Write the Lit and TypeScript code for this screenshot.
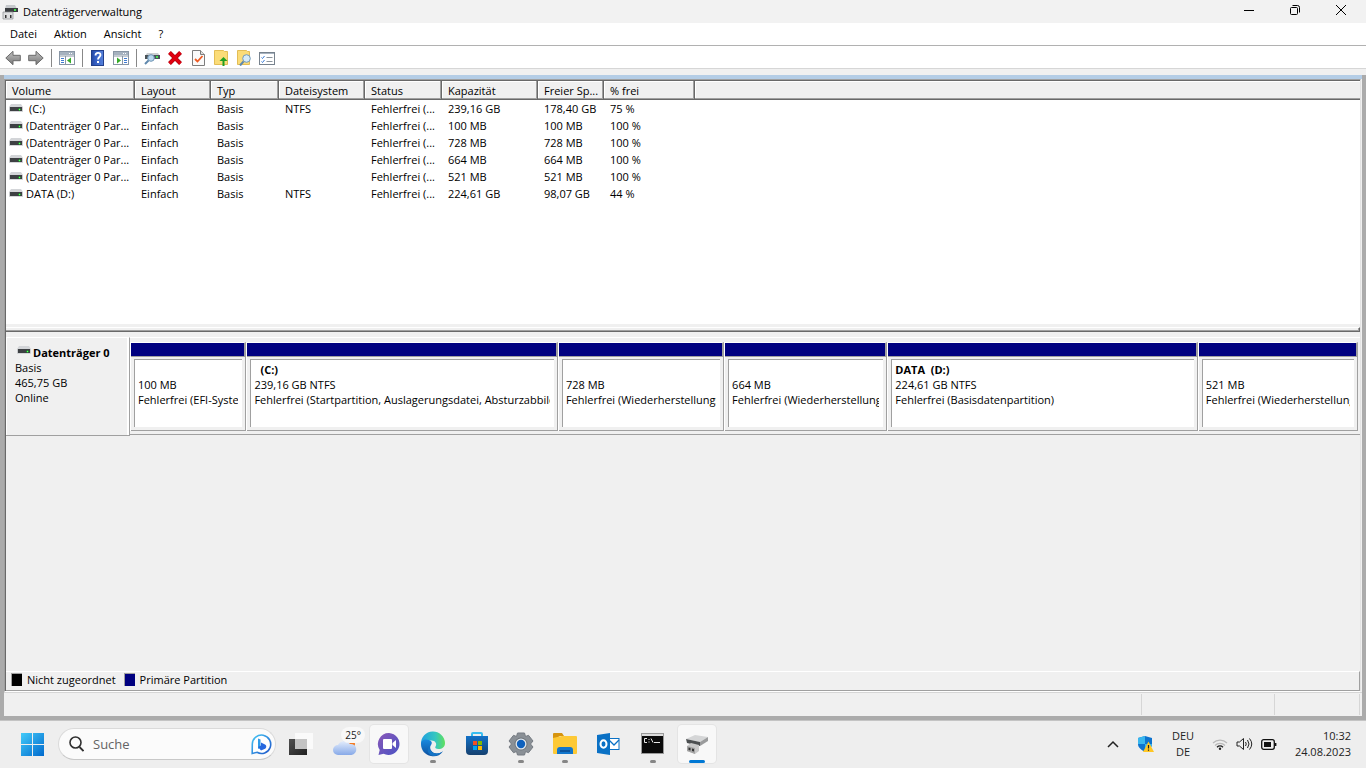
import { LitElement, html, css, svg, nothing } from "lit";
import { customElement } from "lit/decorators.js";
import { styleMap } from "lit/directives/style-map.js";

interface Volume {
  name: string;
  system?: boolean;
  fs: string;
  size: string;
  free: string;
  pct: string;
}

interface Partition {
  name?: string;
  indent?: boolean;
  size: string;
  status: string;
  weight: number;
}

const VOLUMES: Volume[] = [
  { name: "(C:)", system: true, fs: "NTFS", size: "239,16 GB", free: "178,40 GB", pct: "75 %" },
  { name: "(Datenträger 0 Par...", fs: "", size: "100 MB", free: "100 MB", pct: "100 %" },
  { name: "(Datenträger 0 Par...", fs: "", size: "728 MB", free: "728 MB", pct: "100 %" },
  { name: "(Datenträger 0 Par...", fs: "", size: "664 MB", free: "664 MB", pct: "100 %" },
  { name: "(Datenträger 0 Par...", fs: "", size: "521 MB", free: "521 MB", pct: "100 %" },
  { name: "DATA (D:)", fs: "NTFS", size: "224,61 GB", free: "98,07 GB", pct: "44 %" },
];

const PARTITIONS: Partition[] = [
  { size: "100 MB", status: "Fehlerfrei (EFI-Systempartition)", weight: 116 },
  { name: "(C:)", indent: true, size: "239,16 GB NTFS", status: "Fehlerfrei (Startpartition, Auslagerungsdatei, Absturzabbild)", weight: 312 },
  { size: "728 MB", status: "Fehlerfrei (Wiederherstellungspartition)", weight: 166 },
  { size: "664 MB", status: "Fehlerfrei (Wiederherstellungspartition)", weight: 163 },
  { name: "DATA  (D:)", size: "224,61 GB NTFS", status: "Fehlerfrei (Basisdatenpartition)", weight: 311 },
  { size: "521 MB", status: "Fehlerfrei (Wiederherstellungspartition)", weight: 160 },
];

const COLUMNS = [
  ["Volume", "c-volume"], ["Layout", "c-layout"], ["Typ", "c-typ"], ["Dateisystem", "c-fs"],
  ["Status", "c-status"], ["Kapazität", "c-size"], ["Freier Sp...", "c-free"], ["% frei", "c-pct"],
];

const icon = (w: number, h: number, body: unknown) =>
  html`<svg width=${w} height=${h} viewBox="0 0 ${w} ${h}" aria-hidden="true">${body}</svg>`;

const driveIcon = icon(14, 9, svg`
  <path d="M2 0h10l2 3H0z" fill="#d3d5d8"/>
  <rect x="0" y="3" width="14" height="4" fill="#c9cbcd"/>
  <rect x="1" y="3" width="12" height="4" fill="#3d4043"/>
  <rect y="7" width="14" height="1" fill="#d5d7d9"/>
  <rect x="9" y="5" width="3" height="1" fill="#1f9a2a"/><rect x="10" y="4" width="1" height="3" fill="#1f9a2a"/><rect x="10" y="5" width="1" height="1" fill="#5dff66"/>`);

const appIcon = icon(16, 16, svg`
  <path d="M4 1h9l2 4H3z" fill="#c6c9cc"/><rect x="3" y="4" width="13" height="4" fill="#3a3d40"/>
  <rect x="12" y="5" width="2" height="2" fill="#44e04e"/>
  <path d="M1 8h10v7H1z" fill="#dedfe0" stroke="#8b8d90" stroke-width=".7"/>
  <path d="M3 11h1.500v3H3zM8 11h1.500v3H8z" fill="#333"/>`);

const arrow = (right: boolean) => icon(16, 16, svg`
  <g transform=${right ? "matrix(-1 0 0 1 16 0)" : "matrix(1 0 0 1 0 0)"}>
    <defs><linearGradient id="ag" x2="0" y2="1"><stop stop-color="#c2c2c2"/><stop offset="1" stop-color="#777"/></linearGradient></defs>
    <path d="M.8 8L8 1.300v4h7.300v5.400H8v4z" fill="url(#ag)" stroke="#6b6b6b"/>
  </g>`);

const paneIcon = (left: boolean) => icon(16, 14, svg`
  <rect x=".5" y=".5" width="15" height="13" fill="#fff" stroke="#8996a5"/>
  <rect x="1" y="1" width="14" height="3" fill="#a6b2bf"/>
  <path d="M10 2.500h1M12 2.500h1" stroke="#fff"/>
  <path d="M1 5h14" stroke="#8996a5"/>
  ${left
    ? svg`<path d="M6.500 5v8" stroke="#8996a5"/><path d="M2 7.500h3M2 9.500h3M2 11.500h3" stroke="#3f7ad0"/><path d="M12 6.500v6L8 9.500z" fill="#35ab28"/>`
    : svg`<path d="M9.500 5v8" stroke="#8996a5"/><path d="M11 7.500h3M11 9.500h3M11 11.500h3" stroke="#3f7ad0"/><path d="M4 6.500v6l4-3z" fill="#35ab28"/>`}`);

const helpIcon = icon(14, 16, svg`
  <defs><linearGradient id="hg"><stop stop-color="#27489c"/><stop offset=".25" stop-color="#2f58bd"/><stop offset="1" stop-color="#5682dc"/></linearGradient></defs>
  <rect x=".5" y=".5" width="12" height="15" fill="url(#hg)" stroke="#223f8c"/>
  <path d="M4.500 5.500c0-3.500 5-3.500 5-.5 0 2-2.500 2-2.500 4.500" fill="none" stroke="#fff" stroke-width="1.800"/>
  <rect x="6" y="11" width="2" height="2" fill="#fff"/>`);

const connectIcon = icon(16, 14, svg`
  <path d="M3 2h11l2 3H1z" fill="#cdd0d3"/><rect x="1" y="4" width="15" height="4" fill="#4a5257"/>
  <rect x="12" y="5" width="2" height="2" fill="#46e052"/>
  <circle cx="7" cy="7" r="3.300" fill="#b9d7ee" stroke="#6d93b3"/>
  <path d="M4.500 9.500L1 13" stroke="#5f88ad" stroke-width="2"/>`);

const deleteIcon = icon(14, 14, svg`
  <path d="M1.500 1.500L12.500 12.500M12.500 1.500L1.500 12.500" stroke="#a8000c" stroke-width="4"/>
  <path d="M1.500 1.500L12.500 12.500M12.500 1.500L1.500 12.500" stroke="#e0000f" stroke-width="3"/>`);

const checkIcon = icon(13, 16, svg`
  <path d="M.5.5h8l4 4v11H.5z" fill="#fafafa" stroke="#7d7d7d"/><path d="M8.500.500v4h4" fill="#ddd" stroke="#7d7d7d"/>
  <path d="M3 9l2.500 2.500L10.500 6" fill="none" stroke="#ee5a22" stroke-width="1.800"/>`);

const folderUp = icon(14, 16, svg`
  <path d="M.5.5h9l1 1h3v13H.5z" fill="#fbdc78" stroke="#e3bd55"/>
  <path d="M9.500 7L13.500 11h-3v5H8.500v-5h-3z" fill="#22a022"/>`);

const folderSearch = icon(15, 16, svg`
  <path d="M.5.5h9l1 1h2v13H.5z" fill="#fbdc78" stroke="#e3bd55"/>
  <circle cx="9.500" cy="8.500" r="3.800" fill="#d6ebf8" stroke="#7199b8"/>
  <path d="M6.500 11.500L3 15.500" stroke="#5f88ad" stroke-width="2"/>`);

const propsIcon = icon(16, 13, svg`
  <rect x=".5" y=".5" width="15" height="12" fill="#fff" stroke="#77828d"/><path d="M1 1.500h14" stroke="#a6b2bf"/>
  <path d="M2.500 5.500l1 1 2-2.500M2.500 9.500l1 1 2-2.500" fill="none" stroke="#3579d6"/>
  <path d="M7.500 5.500h6M7.500 9.500h6" stroke="#8b949c"/>`);

const startIcon = icon(24, 24, svg`
  <defs><linearGradient id="sg" x2="1" y2="1"><stop stop-color="#43cbf9"/><stop offset="1" stop-color="#0069cd"/></linearGradient></defs>
  <path d="M0 1h11v11H0zM12 1h11v11H12zM0 13h11v11H0zM12 13h11v11H12z" fill="url(#sg)"/>`);

const searchIcon = icon(15, 16, svg`
  <circle cx="6.500" cy="6.500" r="5.500" fill="none" stroke="#303030" stroke-width="1.600"/><path d="M10.500 11l4 4" stroke="#303030" stroke-width="1.800"/>`);

const bingIcon = icon(21, 21, svg`
  <defs><linearGradient id="bg" x2="1" y2="1"><stop stop-color="#45c7f5"/><stop offset="1" stop-color="#1f55c9"/></linearGradient></defs>
  <path d="M1.200 19.500l.1-9.500a9.200 9.200 0 1 1 4.700 8.300z" fill="#fff" stroke="url(#bg)" stroke-width="1.600"/>
  <path d="M7 4.500l2.500 1v8L7 15z" fill="#2f9be8"/><path d="M7 13l3-1.500V8.500l4 2c2 1.200 1.500 3.700-.5 4.500l-3.500 1.500z" fill="#2668df"/>`);

const taskView = icon(24, 24, svg`
  <defs><linearGradient id="tg" y2="1"><stop stop-color="#505050"/><stop offset="1" stop-color="#202020"/></linearGradient></defs>
  <rect x="0" y="7" width="18" height="16" fill="url(#tg)"/><rect x="6" y="1" width="18" height="16" fill="#fafafa"/><rect x="6" y="7" width="12" height="10" fill="#c3c3c3"/>`);

const weatherIcon = icon(30, 30, svg`
  <defs><linearGradient id="wg" x2="0" y2="1"><stop stop-color="#e3edfc"/><stop offset="1" stop-color="#87a9e8"/></linearGradient></defs>
  <circle cx="19" cy="15" r="6" fill="#f47a20"/>
  <path d="M8 26a5 5 0 0 1 0-10 7 7 0 0 1 12-1 5.500 5.500 0 1 1 1.500 11z" fill="url(#wg)"/>`);

const chatIcon = icon(24, 24, svg`
  <defs><linearGradient id="cg" x2="1" y2="1"><stop stop-color="#8a58b8"/><stop offset="1" stop-color="#4a52c4"/></linearGradient></defs>
  <path d="M12 1a11 11 0 1 1-5.500 20.800L1.500 23l1.200-5A11 11 0 0 1 12 1z" fill="url(#cg)"/>
  <rect x="6" y="7" width="9" height="10" rx="1" fill="#fff"/><path d="M15.500 11l3.500-3v8l-3.500-3z" fill="#fff"/>`);

const edgeIcon = icon(26, 26, svg`
  <defs><linearGradient id="e1" x2="1" y2="0"><stop stop-color="#1f9fe0"/><stop offset=".6" stop-color="#35c6c0"/><stop offset="1" stop-color="#5fe05c"/></linearGradient>
  <linearGradient id="e2" x2="0" y2="1"><stop stop-color="#1a8ae0"/><stop offset="1" stop-color="#0d4f9e"/></linearGradient></defs>
  <path d="M1 13A12 12 0 0 1 25 12c0 4-3 6-6.500 6-2.500 0-4-1-3-2.500 2-3-.5-6-4-6C6.500 9.500 1 11 1 16z" fill="url(#e1)"/>
  <path d="M1 13c0-4 4-5.500 8-4 3 1 3.500 3 2 5-2.500 3.500 1 8.500 6 8.500 3 0 4.500-1 6-2.200C20 25 15 26 11 25 5 24 1 19 1 13z" fill="url(#e2)"/>
  <path d="M9.500 15c-.8 6.500 7 10 13.500 5.300-3 3.500-6.500 4.900-10 4.700-5-1-7-6-3.500-10z" fill="#1473c5"/>`);

const storeIcon = icon(24, 26, svg`
  <defs><linearGradient id="st" x2="0" y2="1"><stop stop-color="#1271c7"/><stop offset="1" stop-color="#15406f"/></linearGradient></defs>
  <path d="M7 6V3q0-1 1-1h8q1 0 1 1v3" fill="none" stroke="#38bdf0" stroke-width="2"/>
  <path d="M1 5h22v15q0 4-4 4H5q-4 0-4-4z" fill="url(#st)"/>
  <path d="M8 10h4v4H8z" fill="#f25022"/><path d="M13 10h4v4h-4z" fill="#7fba00"/><path d="M8 15h4v4H8z" fill="#00a4ef"/><path d="M13 15h4v4h-4z" fill="#ffb900"/>`);

const gearIcon = icon(26, 24, svg`
  <path d="M9.500 1h7l1 3.500 3-1.200L25 9l-2.500 3L25 15l-4.500 5.700-3-1.200-1 3.500h-7l-1-3.500-3 1.200L1 15l2.500-3L1 9l4.500-5.700 3 1.200z" fill="#8a9096" stroke="#757b82" stroke-linejoin="round"/>
  <circle cx="13" cy="12" r="6.500" fill="#6e757c"/><circle cx="13" cy="12" r="5.500" fill="#e3e8ec"/><circle cx="13" cy="12" r="4.200" fill="#0f61bd"/>`);

const folderIcon = icon(25, 24, svg`
  <path d="M0 2q0-1 1-1h8l2 3h-4L0 8z" fill="#d6940f"/><path d="M0 6l9-2h14q1 0 1 1v16q0 1-1 1H1q-1 0-1-1z" fill="#fdc936"/>
  <path d="M4 22v-4q0-3 3-3h10q3 0 3 3v4z" fill="#1276cc"/><path d="M7 19h10" stroke="#0c549d" stroke-width="2"/>`);

const outlookIcon = icon(24, 24, svg`
  <rect x="11" y="6.500" width="11" height="11" fill="#fff" stroke="#0a71c5"/><path d="M12 8l5 5 5-5" fill="none" stroke="#0a71c5" stroke-width="1.300"/>
  <path d="M0 3l13-2v22L0 21z" fill="#0a71c5"/><ellipse cx="6.500" cy="12" rx="3" ry="3.700" fill="none" stroke="#fff" stroke-width="2"/>`);

const cmdIcon = icon(24, 22, svg`
  <rect x=".5" y=".5" width="22" height="20" fill="#0b0b0b" stroke="#9a9a9a"/><rect x="1" y="1" width="21" height="2" fill="#dcdcdc"/>
  <path d="M6 5.500H3.500v4H6M8 6v1M8 8.500v1M10 5.500l2 4M13 9.500h6" fill="none" stroke="#e8e8e8"/>`);

const diskTask = icon(24, 24, svg`
  <path d="M1 7l9-4 13 2-8 5z" fill="#d5d6d7"/><path d="M1 7l14 3v4L2 11z" fill="#4c4f51"/><path d="M15 10l8-5v4l-8 5z" fill="#9a9b9c"/>
  <path d="M2 14l4-3 8 2v6l-4 3-8-3z" fill="#c9c9c9"/><path d="M2 14l8 2v6l-8-3z" fill="#a5a5a5"/><path d="M3.500 15.500l2 .5v2.500l-2-.5zM7 16.500l2 .5v2.500l-2-.5z" fill="#333"/>`);

const chevronIcon = icon(12, 8, svg`<path d="M1 7l5-5 5 5" fill="none" stroke="#222" stroke-width="1.500"/>`);
const shieldIcon = icon(16, 16, svg`
  <path d="M7 0l7 2v6c0 4-4 6-7 8-3-2-7-4-7-8V2z" fill="#0d73cf"/><path d="M7 0v8H0V2zM7 8h7c0 4-4 6-7 8z" fill="#39b7ee"/>
  <path d="M10.500 5.500L16 16H5z" fill="#ffc725"/><path d="M10.500 9v3.500M10.500 13.500v1.200" stroke="#222" stroke-width="1.200"/>`);
const wifiIcon = icon(16, 12, svg`
  <path d="M1 5a10 10 0 0 1 14 0M3 7.500a7 7 0 0 1 10 0" fill="none" stroke="#b9b9b9" stroke-width="1.200"/>
  <path d="M5 9.200a4.300 4.300 0 0 1 6 0" fill="none" stroke="#222" stroke-width="1.300"/><circle cx="8" cy="10.800" r="1.200" fill="#222"/>`);
const soundIcon = icon(17, 14, svg`
  <path d="M1 5h2.500L7.500 1.500v11L3.500 9H1z" fill="none" stroke="#222" stroke-linejoin="round"/>
  <path d="M9.500 5q1.500 2 0 4M11.500 3q3 4 0 8M13.500 1.500q4.500 5.500 0 11" fill="none" stroke="#222"/>`);
const batteryIcon = icon(16, 11, svg`
  <rect x=".7" y=".7" width="12.600" height="9.600" rx="2" fill="none" stroke="#111" stroke-width="1.300"/><rect x="3" y="3" width="7" height="5" fill="#111"/>
  <path d="M14.500 4v3" stroke="#111" stroke-width="1.800"/>`);

const minIcon = icon(12, 12, svg`<path d="M1 6.500h10" stroke="#000"/>`);
const maxIcon = icon(12, 12, svg`<rect x="1.500" y="3.500" width="7" height="7" rx="1" fill="none" stroke="#000"/><path d="M3.500 1.500H8.500q2 0 2 2V8.500" fill="none" stroke="#000"/>`);
const closeIcon = icon(12, 12, svg`<path d="M1 1l10 10M11 1L1 11" stroke="#000"/>`);

const base = css`
  *, *::before, *::after { box-sizing: border-box; }
  svg { display: block; flex: none; }
  button {
    font: inherit; color: inherit; border: 0; padding: 0; background: none;
    display: flex; align-items: center; justify-content: center;
  }
`;

@customElement("volume-table")
export class VolumeTable extends LitElement {
  static styles = [base, css`
    :host { display: block; flex: 1; min-height: 0; background: #fff; overflow: hidden; }
    table { width: 100%; table-layout: fixed; border-collapse: separate; border-spacing: 0; }
    .c-volume { width: 129px; }
    .c-layout { width: 76px; }
    .c-typ { width: 68px; }
    .c-fs { width: 86px; }
    .c-status { width: 77px; }
    .c-size { width: 96px; }
    .c-free { width: 66px; }
    .c-pct { width: 91px; }
    th, td { padding: 0 0 0 6px; text-align: left; font-weight: normal; white-space: nowrap; overflow: hidden; }
    th {
      height: 19px; background: #f0f0f0;
      border-bottom: 1px solid #696969;
      border-right: 1px solid #696969;
      box-shadow: inset -1px -1px #a0a0a0, inset 1px 1px #fff;
    }
    th:last-child { border-right: 0; box-shadow: inset 0 -1px #a0a0a0, inset 1px 1px #fff; }
    td { height: 17px; line-height: 17px; }
    .name { display: flex; align-items: center; gap: 3px; margin-left: -3px; }
    .system { padding-left: 3px; }
  `];

  render() {
    return html`
      <table>
        <thead>
          <tr>${COLUMNS.map(([label, cls]) => html`<th class=${cls} scope="col">${label}</th>`)}<th></th></tr>
        </thead>
        <tbody>
          ${VOLUMES.map((v) => html`
            <tr>
              <td><div class="name">${driveIcon}<span class=${v.system ? "system" : ""}>${v.name}</span></div></td>
              <td>Einfach</td><td>Basis</td><td>${v.fs}</td><td>Fehlerfrei (...</td>
              <td>${v.size}</td><td>${v.free}</td><td>${v.pct}</td><td></td>
            </tr>`)}
        </tbody>
      </table>`;
  }
}

@customElement("disk-map")
export class DiskMap extends LitElement {
  static styles = [base, css`
    :host { display: block; flex: none; height: 339px; padding-top: 5px; background: #f0f0f0; line-height: 15px; }
    .disk { display: flex; height: 99px; }
    .label {
      width: 124px; padding: 7px 0 0 9px; flex: none;
      border: 1px solid #a0a0a0; border-top-color: #fff; border-left: 0;
      box-shadow: inset 1px 0 #fff, inset -2px 0 #fff;
    }
    .title { display: flex; gap: 2px; padding-left: 2px; font-weight: bold; }
    .title svg { margin-top: 1px; }
    .parts {
      flex: 1; min-width: 0; display: flex; height: 98px; padding: 4px 2px 3px 0;
      border-top: 1px solid #fff; border-bottom: 1px solid #a0a0a0;
    }
    .part { min-width: 0; display: flex; flex-direction: column; border-left: 1px solid #fff; }
    .bar { height: 15px; background: #000080; border-top: 1px solid #fff; border-bottom: 1px solid #a0a0a0; border-right: 2px solid #a0a0a0; flex: none; }
    .frame { flex: 1; padding: 2px 3px 3px; border-right: 1px solid #a0a0a0; border-bottom: 1px solid #a0a0a0; }
    .info {
      height: 100%; padding: 2px 4px 0 3px; background: #fff;
      border-top: 1px solid #a0a0a0; border-left: 1px solid #a0a0a0;
    }
    .line { height: 15px; overflow: hidden; white-space: pre; }
    .strong { font-weight: bold; }
    .indent { padding-left: 6px; }
  `];

  render() {
    return html`
      <div class="disk">
        <div class="label">
          <div class="title">${driveIcon}<span>Datenträger 0</span></div>
          <div>Basis</div><div>465,75 GB</div><div>Online</div>
        </div>
        <div class="parts">
          ${PARTITIONS.map((p) => html`
            <div class="part" style=${styleMap({ flex: `${p.weight} 1 0` })}>
              <div class="bar"></div>
              <div class="frame"><div class="info">
                <div class="line strong ${p.indent ? "indent" : ""}">${p.name ?? nothing}</div>
                <div class="line">${p.size}</div>
                <div class="line">${p.status}</div>
              </div></div>
            </div>`)}
        </div>
      </div>`;
  }
}

@customElement("task-bar")
export class TaskBar extends LitElement {
  static styles = [base, css`
    :host {
      display: flex; align-items: center; height: 48px; flex: none;
      padding: 0 15px 1px 11px; background: #eee; border-top: 1px solid #c4c4c4; color: #222;
    }
    .app { width: 44px; height: 46px; flex: none; position: relative; }
    .tile { width: 38px; height: 38px; display: flex; align-items: center; justify-content: center; border-radius: 4px; }
    .lit { background: #f8f8f8; box-shadow: 0 0 0 1px #e4e4e4; }
    .dot { position: absolute; bottom: 4px; left: 19px; width: 6px; height: 3px; border-radius: 2px; background: #868686; }
    .wide { left: 14px; width: 16px; background: #0078d4; }
    .temp {
      position: absolute; top: 6px; right: 2px; padding: 0 4px; border-radius: 8px;
      height: 16px; line-height: 16px; font-size: 10px; background: #f8f8f8;
    }
    .search {
      display: flex; align-items: center; gap: 9px; width: 218px; height: 32px; flex: none;
      margin: 0 3px; padding: 0 3px 0 10px; border-radius: 16px;
      background: #fbfbfb; border: 1px solid #dadada; border-bottom-color: #c8c8c8;
    }
    input { flex: 1; min-width: 0; padding: 0; border: 0; outline: 0; background: none; font: inherit; font-size: 13px; }
    input::placeholder { color: #646464; opacity: 1; }
    .tray { margin-left: auto; display: flex; align-items: center; line-height: 16px; }
    .chev { width: 32px; height: 40px; }
    .shield { width: 34px; height: 40px; }
    .lang { width: 40px; height: 40px; flex-direction: column; }
    .status { gap: 8px; width: 82px; height: 40px; }
    .clock { flex-direction: column; align-items: flex-end; width: 66px; height: 40px; }
  `];

  private app(label: string, body: unknown, state = "", lit = false) {
    return html`<button class="app" aria-label=${label}>
      <span class="tile ${lit ? "lit" : ""}">${body}</span>
      ${state ? html`<span class="dot ${state}"></span>` : nothing}
    </button>`;
  }

  render() {
    return html`
      <button class="app" aria-label="Start">${startIcon}</button>
      <div class="search" role="search">
        ${searchIcon}<input type="search" placeholder="Suche" aria-label="Suche" />
        <button aria-label="Bing">${bingIcon}</button>
      </div>
      ${this.app("Aktive Anwendungen", taskView)}
      <button class="app" aria-label="Wetter">${weatherIcon}<span class="temp">25°</span></button>
      ${this.app("Chat", chatIcon, "", true)}
      ${this.app("Edge", edgeIcon, "run")}
      ${this.app("Store", storeIcon)}
      ${this.app("Einstellungen", gearIcon, "run")}
      ${this.app("Explorer", folderIcon, "run")}
      ${this.app("Outlook", outlookIcon)}
      ${this.app("Eingabeaufforderung", cmdIcon, "run")}
      ${this.app("Datenträgerverwaltung", diskTask, "wide", true)}
      <div class="tray">
        <button class="chev" aria-label="Ausgeblendete Symbole">${chevronIcon}</button>
        <button class="shield" aria-label="Sicherheit">${shieldIcon}</button>
        <button class="lang"><span>DEU</span><span>DE</span></button>
        <button class="status" aria-label="Netzwerk, Ton, Akku">${wifiIcon}${soundIcon}${batteryIcon}</button>
        <button class="clock"><span>10:32</span><span>24.08.2023</span></button>
      </div>`;
  }
}

@customElement("app-root")
export class AppRoot extends LitElement {
  static styles = [base, css`
    :host {
      display: flex; flex-direction: column; height: 100vh; overflow: hidden;
      font: 11px/15px "Open Sans", "Noto Sans", sans-serif; color: #000; background: #ababab;
    }
    .titlebar { display: flex; align-items: center; height: 23px; flex: none; padding-left: 2px; gap: 5px; background: #f2f2f2; }
    .caption { margin-left: auto; display: flex; align-self: flex-start; padding-right: 2px; }
    .caption button { width: 46px; height: 20px; }
    .menu { display: flex; gap: 1px; height: 23px; flex: none; padding-left: 2px; background: #fff; border-bottom: 1px solid #b1b1b1; }
    .menu button { padding: 0 8px 2px; }
    .tools { display: flex; align-items: center; gap: 1px; height: 23px; flex: none; padding: 2px 0 0 2px; background: #fff; border-bottom: 1px solid #d6d6d6; }
    .tools button { width: 22px; height: 20px; }
    .sep { width: 1px; height: 18px; margin: 0 3px; background: #888; }
    .gap { height: 6px; flex: none; background: #f0f0f0; }
    .client { flex: 1; min-height: 0; display: flex; flex-direction: column; margin: 0 4px 4px; background: #f0f0f0; }
    .strip { height: 4px; flex: none; background: #b4cde6; }
    .pane {
      flex: 1; min-height: 0; display: flex; flex-direction: column; margin-right: 1px;
      border: 1px solid #a0a0a0; border-right-color: #e3e3e3; border-bottom-color: #fff;
      box-shadow: inset 1px 1px #696969; padding: 1px 0 0 1px;
    }
    .splitter {
      height: 8px; flex: none; background: #f0f0f0; padding-top: 3px;
    }
    .grip { height: 5px; border-top: 1px solid #fff; border-bottom: 1px solid #696969; border-right: 1px solid #696969; box-shadow: inset -1px -1px #a0a0a0; }
    .legend {
      display: flex; align-items: center; height: 20px; flex: none; padding-left: 5px; gap: 5px; line-height: 14px;
      border-top: 1px solid #fff; border-bottom: 1px solid #a0a0a0; border-right: 1px solid #a0a0a0;
    }
    .entry { display: flex; gap: 5px; margin-right: 3px; }
    .entry span { padding-bottom: 2px; }
    .swatch { width: 11px; height: 13px; border: 1px solid #a0a0a0; border-width: 1px 0 0 1px; }
    .black { background: #000; }
    .navy { background: #000080; }
    .statusbar { display: flex; height: 24px; flex: none; padding: 1px 2px 1px 0; border-top: 1px solid #d6d6d6; }
    .cell { border-right: 1px solid #d6d6d6; }
    .main { flex: 1; }
    .mid { width: 133px; }
    .last { width: 85px; }
  `];

  render() {
    return html`
      <header class="titlebar">
        ${appIcon}<span>Datenträgerverwaltung</span>
        <div class="caption">
          <button aria-label="Minimieren">${minIcon}</button>
          <button aria-label="Verkleinern">${maxIcon}</button>
          <button aria-label="Schließen">${closeIcon}</button>
        </div>
      </header>
      <nav class="menu">
        <button>Datei</button><button>Aktion</button><button>Ansicht</button><button>?</button>
      </nav>
      <div class="tools" role="toolbar">
        <button aria-label="Zurück">${arrow(false)}</button>
        <button aria-label="Vorwärts">${arrow(true)}</button>
        <span class="sep"></span>
        <button aria-label="Konsolenstruktur">${paneIcon(true)}</button>
        <span class="sep"></span>
        <button aria-label="Hilfe">${helpIcon}</button>
        <button aria-label="Aktionsbereich">${paneIcon(false)}</button>
        <span class="sep"></span>
        <button aria-label="Verbinden">${connectIcon}</button>
        <button aria-label="Löschen">${deleteIcon}</button>
        <button aria-label="Aktiv markieren">${checkIcon}</button>
        <button aria-label="Öffnen">${folderUp}</button>
        <button aria-label="Durchsuchen">${folderSearch}</button>
        <button aria-label="Eigenschaften">${propsIcon}</button>
      </div>
      <div class="gap"></div>
      <main class="client">
        <div class="strip"></div>
        <div class="pane">
          <volume-table></volume-table>
          <div class="splitter"><div class="grip"></div></div>
          <disk-map></disk-map>
          <div class="legend">
            <div class="entry"><div class="swatch black"></div><span>Nicht zugeordnet</span></div>
            <div class="entry"><div class="swatch navy"></div><span>Primäre Partition</span></div>
          </div>
        </div>
        <div class="statusbar">
          <div class="cell main"></div><div class="cell mid"></div><div class="cell last"></div>
        </div>
      </main>
      <task-bar></task-bar>`;
  }
}
